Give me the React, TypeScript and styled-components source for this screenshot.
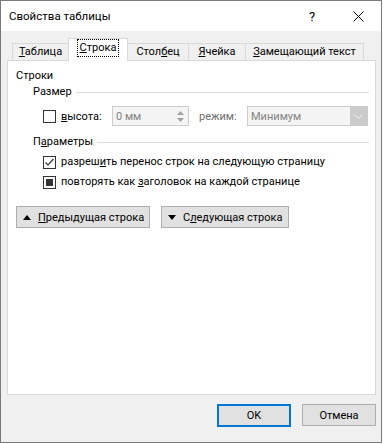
import React from 'react';
import styled, { createGlobalStyle } from 'styled-components';

const Global = createGlobalStyle`
  body {
    margin: 0;
    background: #fff;
    font-family: 'Segoe UI', Roboto, 'Noto Sans', sans-serif;
    font-size: 11px;
    color: #000;
  }
`;

const Window = styled.div`
  box-sizing: border-box;
  width: 382px;
  height: 443px;
  border: 1px solid #7a7a7a;
  background: #f0f0f0;
  display: flex;
  flex-direction: column;
`;

const TitleBar = styled.div`
  height: 30px;
  background: #fff;
  display: flex;
  align-items: center;
  padding-left: 8px;
`;

const Title = styled.span`
  flex: 1;
  font-size: 11.5px;
  margin-top: -1px;
`;

const TitleButton = styled.div`
  width: 46px;
  height: 30px;
  display: flex;
  align-items: center;
  justify-content: center;
  font-size: 13px;
`;

const Body = styled.div`
  flex: 1;
  display: flex;
  flex-direction: column;
  margin: 0 5px 0 6px;
`;

const TabStrip = styled.div`
  display: flex;
  align-items: flex-end;
  padding: 7px 0 0 5px;
  height: 22px;
`;

const Tab = styled.div<{ $w: number; $active?: boolean }>`
  box-sizing: border-box;
  width: ${(p) => p.$w}px;
  height: ${(p) => (p.$active ? 23 : 17)}px;
  margin-left: -1px;
  margin-bottom: ${(p) => (p.$active ? -1 : 0)}px;
  border: 1px solid #d9d9d9;
  border-bottom: none;
  background: ${(p) => (p.$active ? '#fff' : '#f0f0f0')};
  position: relative;
  z-index: ${(p) => (p.$active ? 2 : 1)};
  display: flex;
  justify-content: center;
  align-items: ${(p) => (p.$active ? 'flex-start' : 'center')};
  padding-top: ${(p) => (p.$active ? 1 : 0)}px;
  line-height: 16px;
  white-space: nowrap;
  &:first-child {
    margin-left: 0;
  }
`;

const Focus = styled.span`
  outline: 1px dotted #000;
  outline-offset: 0;
  padding: 0 2px;
  line-height: 16px;
`;

const Panel = styled.div`
  flex: 1;
  box-sizing: border-box;
  border: 1px solid #d9d9d9;
  background: #fff;
  padding: 7px 6px 0 8px;
  display: flex;
  flex-direction: column;
  position: relative;
  z-index: 1;
`;

const Line = styled.div<{ $indent?: number; $top?: number }>`
  display: flex;
  align-items: center;
  height: 16px;
  line-height: 16px;
  padding-left: ${(p) => p.$indent ?? 0}px;
  margin-top: ${(p) => p.$top ?? 0}px;
  white-space: nowrap;
`;

const GroupRule = styled.div`
  flex: 1;
  height: 0;
  border-top: 1px solid #dcdcdc;
  margin-left: 4px;
`;

const SizeRow = styled.div`
  display: flex;
  align-items: center;
  height: 20px;
  margin-top: 6px;
  padding-left: 27px;
`;

const Box = styled.span`
  box-sizing: border-box;
  width: 13px;
  height: 13px;
  border: 1px solid #333;
  background: #fff;
  display: inline-flex;
  align-items: center;
  justify-content: center;
  flex-shrink: 0;
`;

const Mixed = styled.span`
  width: 7px;
  height: 7px;
  background: #333;
`;

const CheckText = styled.span<{ $w?: number }>`
  margin-left: 5px;
  width: ${(p) => (p.$w ? `${p.$w}px` : 'auto')};
  flex-shrink: 0;
`;

const Field = styled.div<{ $w: number }>`
  box-sizing: border-box;
  width: ${(p) => p.$w}px;
  height: 20px;
  border: 1px solid #cccccc;
  background: #f4f4f4;
  color: #838383;
  display: flex;
  align-items: center;
  padding-left: 3px;
  flex-shrink: 0;
`;

const FieldText = styled.span`
  flex: 1;
`;

const Spin = styled.div`
  width: 13px;
  height: 18px;
  display: flex;
  flex-direction: column;
  align-items: center;
  justify-content: center;
  gap: 3px;
  margin-right: 1px;
`;

const DropButton = styled.div`
  width: 17px;
  height: 18px;
  background: #cccccc;
  display: flex;
  align-items: center;
  justify-content: center;
`;

const Dim = styled.span`
  color: #6d6d6d;
  width: 58px;
  padding-left: 10px;
  box-sizing: border-box;
  flex-shrink: 0;
`;

const CheckRow = styled.div<{ $top: number }>`
  display: flex;
  align-items: center;
  height: 16px;
  line-height: 16px;
  padding-left: 27px;
  margin-top: ${(p) => p.$top}px;
  white-space: nowrap;
`;

const NavRow = styled.div`
  display: flex;
  gap: 11px;
  margin-top: 16px;
`;

const Button = styled.div<{ $w: number; $default?: boolean }>`
  box-sizing: border-box;
  width: ${(p) => p.$w}px;
  height: ${(p) => (p.$default ? 23 : 22)}px;
  border: ${(p) => (p.$default ? '2px solid #0078d7' : '1px solid #adadad')};
  background: #e1e1e1;
  display: flex;
  align-items: center;
  justify-content: center;
  white-space: nowrap;
`;

const NavButton = styled(Button)`
  justify-content: flex-start;
  padding-left: 6px;
  gap: 7px;
  svg {
    flex-shrink: 0;
  }
`;

const Footer = styled.div`
  height: 38px;
  display: flex;
  justify-content: flex-end;
  align-items: flex-start;
  gap: 11px;
  padding: 9px 5px 0 0;
`;

const Tri = ({ down }: { down?: boolean }) => (
  <svg width="8" height="5" viewBox="0 0 8 5">
    <path d={down ? 'M0 0H8L4 5Z' : 'M0 5H8L4 0Z'} fill="#000" />
  </svg>
);

const SmallTri = ({ down }: { down?: boolean }) => (
  <svg width="7" height="4" viewBox="0 0 7 4">
    <path d={down ? 'M0 0H7L3.5 4Z' : 'M0 4H7L3.5 0Z'} fill="#a0a0a0" />
  </svg>
);

const App = () => (
  <>
    <Global />
    <Window>
      <TitleBar>
        <Title>Свойства таблицы</Title>
        <TitleButton>?</TitleButton>
        <TitleButton>
          <svg width="11" height="11" viewBox="0 0 11 11">
            <path d="M0.5 0.5L10.5 10.5M10.5 0.5L0.5 10.5" stroke="#000" strokeWidth="1" />
          </svg>
        </TitleButton>
      </TitleBar>
      <Body>
        <TabStrip>
          <Tab $w={57}>
            <span><u>Т</u>аблица</span>
          </Tab>
          <Tab $w={60} $active>
            <Focus><u>С</u>трока</Focus>
          </Tab>
          <Tab $w={62}>
            <span>Стол<u>б</u>ец</span>
          </Tab>
          <Tab $w={58}>
            <span><u>Я</u>чейка</span>
          </Tab>
          <Tab $w={119}>
            <span><u>З</u>амещающий текст</span>
          </Tab>
        </TabStrip>
        <Panel>
          <Line>Строки</Line>
          <Line $indent={17}>
            Размер
            <GroupRule />
          </Line>
          <SizeRow>
            <Box />
            <CheckText $w={51}>
              <u>в</u>ысота:
            </CheckText>
            <Field $w={77}>
              <FieldText>0 мм</FieldText>
              <Spin>
                <SmallTri />
                <SmallTri down />
              </Spin>
            </Field>
            <Dim>режим:</Dim>
            <Field $w={121}>
              <FieldText>Минимум</FieldText>
              <DropButton>
                <svg width="9" height="5" viewBox="0 0 9 5">
                  <path d="M0.5 0.5L4.5 4.5L8.5 0.5" stroke="#eeeeee" fill="none" />
                </svg>
              </DropButton>
            </Field>
          </SizeRow>
          <Line $indent={17} $top={8}>
            П<u>а</u>раметры
            <GroupRule />
          </Line>
          <CheckRow $top={4}>
            <Box>
              <svg width="11" height="11" viewBox="0 0 11 11">
                <path d="M1.5 5.5L4 8L9.5 2" stroke="#333" strokeWidth="1.2" fill="none" />
              </svg>
            </Box>
            <CheckText>
              разреш<u>и</u>ть перенос строк на следующую страницу
            </CheckText>
          </CheckRow>
          <CheckRow $top={4}>
            <Box>
              <Mixed />
            </Box>
            <CheckText>
              повторять как <u>з</u>аголовок на каждой странице
            </CheckText>
          </CheckRow>
          <NavRow>
            <NavButton $w={134}>
              <Tri />
              <span><u>П</u>редыдущая строка</span>
            </NavButton>
            <NavButton $w={128}>
              <Tri down />
              <span>С<u>л</u>едующая строка</span>
            </NavButton>
          </NavRow>
        </Panel>
      </Body>
      <Footer>
        <Button $w={74} $default>
          OK
        </Button>
        <Button $w={74}>Отмена</Button>
      </Footer>
    </Window>
  </>
);

export default App;
